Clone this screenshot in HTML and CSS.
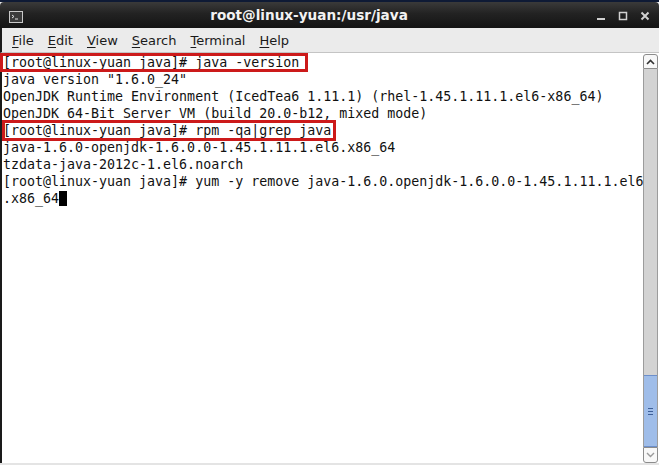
FILE: index.html
```html
<!DOCTYPE html>
<html lang="en">
<head>
    <meta charset="UTF-8">
    <title>root@linux-yuan:/usr/java</title>
    <link rel="stylesheet" href="styles.css">
</head>
<body>
    <div class="window">
        <div class="titlebar">
            <div class="term-icon">
                <svg width="14" height="12" viewBox="0 0 14 12">
                    <rect x="0.5" y="0.5" width="13" height="11" fill="#3b3b3b" stroke="#c9c9c9"/>
                    <path d="M3 4 L5 5.5 L3 7" fill="none" stroke="#e0e0e0" stroke-width="1"/>
                    <path d="M6 8 H9" stroke="#e0e0e0" stroke-width="1"/>
                </svg>
            </div>
            <div class="title">root@linux-yuan:/usr/java</div>
            <div class="win-buttons">
                <svg width="10" height="10" viewBox="0 0 10 10"><rect x="1" y="7" width="8" height="2" fill="#d0d0d0"/></svg>
                <svg width="10" height="10" viewBox="0 0 10 10"><rect x="1.5" y="1.5" width="7" height="7" fill="none" stroke="#d0d0d0" stroke-width="1.5"/></svg>
                <svg width="10" height="10" viewBox="0 0 10 10"><path d="M1.5 1.5 L8.5 8.5 M8.5 1.5 L1.5 8.5" stroke="#d0d0d0" stroke-width="2"/></svg>
            </div>
        </div>

        <div class="menubar">
            <span><u>F</u>ile</span>
            <span><u>E</u>dit</span>
            <span><u>V</u>iew</span>
            <span><u>S</u>earch</span>
            <span><u>T</u>erminal</span>
            <span><u>H</u>elp</span>
        </div>

        <div class="content">
            <div class="terminal">
<pre>[root@linux-yuan java]# java -version
java version "1.6.0_24"
OpenJDK Runtime Environment (IcedTea6 1.11.1) (rhel-1.45.1.11.1.el6-x86_64)
OpenJDK 64-Bit Server VM (build 20.0-b12, mixed mode)
[root@linux-yuan java]# rpm -qa|grep java
java-1.6.0-openjdk-1.6.0.0-1.45.1.11.1.el6.x86_64
tzdata-java-2012c-1.el6.noarch
[root@linux-yuan java]# yum -y remove java-1.6.0.openjdk-1.6.0.0-1.45.1.11.1.el6
.x86_64<span class="cursor"> </span></pre>
                <div class="mark mark-one"></div>
                <div class="mark mark-two"></div>
            </div>
            <div class="scrollbar">
                <div class="sb-button up">
                    <svg width="9" height="6" viewBox="0 0 9 6"><path d="M1 5 L4.5 1.5 L8 5" fill="none" stroke="#333" stroke-width="1.6"/></svg>
                </div>
                <div class="trough">
                    <div class="thumb">
                        <span></span><span></span><span></span>
                    </div>
                </div>
                <div class="sb-button down">
                    <svg width="9" height="6" viewBox="0 0 9 6"><path d="M1 1 L4.5 4.5 L8 1" fill="none" stroke="#9a9a9a" stroke-width="1.4"/></svg>
                </div>
            </div>
        </div>
        <div class="bottom"></div>
    </div>
</body>
</html>
```

FILE: styles.css
```css
body {
    margin: 0;
    background-color: #0e1a35;
}
.window {
    width: 659px;
    height: 465px;
    display: flex;
    flex-direction: column;
    border-top: 2px solid #0e1a35;
    box-sizing: border-box;
    background-color: #ececec;
}
.titlebar {
    height: 26px;
    display: flex;
    align-items: center;
    background: linear-gradient(#3a3a3a, #222222 45%, #141414);
    border-radius: 4px 4px 0 0;
}
.term-icon {
    width: 30px;
    padding-left: 9px;
    box-sizing: border-box;
    display: flex;
    align-items: center;
    margin-top: 3px;
}
.title {
    flex: 1;
    text-align: center;
    color: #f2f2f2;
    font-family: "DejaVu Sans", sans-serif;
    font-weight: bold;
    font-size: 13.6px;
    padding-left: 12px;
}
.win-buttons {
    display: flex;
    align-items: center;
    gap: 12px;
    padding-right: 9px;
    padding-left: 20px;
    margin-top: 2px;
}
.menubar {
    height: 24px;
    display: flex;
    align-items: center;
    gap: 14px;
    padding-left: 10px;
    background-color: #ebebeb;
    border-bottom: 1px solid #c4c4c4;
    border-left: 2px solid #1a1a1a;
    font-family: "DejaVu Sans", sans-serif;
    font-size: 13px;
    color: #1a1a1a;
}
.menubar u {
    text-underline-offset: 2px;
}
.content {
    flex: 1;
    display: flex;
    border-left: 2px solid #1a1a1a;
    background-color: #ffffff;
}
.terminal {
    flex: 1;
    position: relative;
    padding: 1px 0 0 1px;
}
.terminal pre {
    margin: 0;
    font-family: "DejaVu Sans Mono", monospace;
    font-size: 13.3px;
    line-height: 17px;
    color: #111111;
}
.cursor {
    background-color: #000000;
}
.mark {
    position: absolute;
    border: 3px solid #cc1a1a;
}
.mark-one {
    left: -2px;
    top: 0;
    width: 302px;
    height: 13px;
}
.mark-two {
    left: 0;
    top: 67px;
    width: 328px;
    height: 15px;
}
.scrollbar {
    width: 15px;
    margin-right: 1px;
    display: flex;
    flex-direction: column;
    padding-top: 1px;
}
.sb-button {
    height: 13px;
    display: flex;
    align-items: center;
    justify-content: center;
    background-color: #f8f8f8;
    border: 1px solid #8c8c8c;
}
.sb-button.up {
    border-radius: 3px 3px 0 0;
}
.sb-button.down {
    height: 14px;
    border-radius: 0 0 3px 3px;
}
.trough {
    flex: 1;
    display: flex;
    flex-direction: column;
    justify-content: flex-end;
    background-color: #d3d3d3;
    border-left: 1px solid #9c9c9c;
    border-right: 1px solid #9c9c9c;
}
.thumb {
    height: 70px;
    display: flex;
    flex-direction: column;
    align-items: center;
    justify-content: center;
    gap: 2px;
    background-color: #9fbde9;
    border-top: 1px solid #6c8fcb;
    border-bottom: 1px solid #6c8fcb;
}
.thumb span {
    width: 5px;
    height: 1px;
    background-color: #3d5f98;
}
.bottom {
    height: 2px;
    background-color: #e4e4e4;
}
```
